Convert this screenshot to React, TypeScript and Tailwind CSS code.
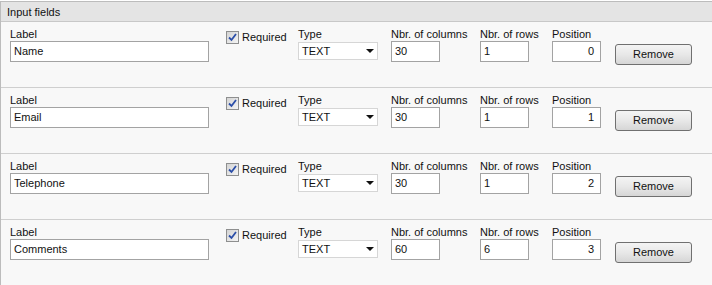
import React, { ReactElement } from "react";

const fields = [
  { label: "Name", cols: "30", rows: "1", position: "0" },
  { label: "Email", cols: "30", rows: "1", position: "1" },
  { label: "Telephone", cols: "30", rows: "1", position: "2" },
  { label: "Comments", cols: "60", rows: "6", position: "3" },
];

function Checkbox(): ReactElement {
  return (
    <div className="flex h-[13px] w-[13px] items-center justify-center border border-[#8e8f8f] bg-gradient-to-br from-[#d4d4d4] to-[#f4f4f4]">
      <svg width="9" height="9" viewBox="0 0 9 9">
        <path d="M1 4.5 L3.5 7 L8 1" fill="none" stroke="#2b4ea8" strokeWidth="1.8" />
      </svg>
    </div>
  );
}

function TextBox(props: { value: string; width: string; right?: boolean }): ReactElement {
  const { value, width, right } = props;
  return (
    <div
      className={`flex h-[21px] ${width} items-center border border-[#a3a3a3] bg-white ${
        right ? "justify-end pr-[6px]" : "pl-[3px]"
      }`}
    >
      {value}
    </div>
  );
}

function FieldRow(props: { label: string; cols: string; rows: string; position: string }): ReactElement {
  const { label, cols, rows, position } = props;
  return (
    <div className="flex h-[66px] border-b border-[#cfcfcf] bg-[#f8f8f8] pl-[9px] pt-[5px] last:border-b-0">
      <div className="w-[216px]">
        <div className="h-[14px] leading-[14px]">Label</div>
        <TextBox value={label} width="w-[199px]" />
      </div>
      <div className="flex w-[72px] items-center gap-[3px] self-start pt-[3px]">
        <Checkbox />
        <span className="leading-[14px]">Required</span>
      </div>
      <div className="w-[93px]">
        <div className="h-[14px] leading-[14px]">Type</div>
        <div className="mt-[1px] flex h-[18px] w-[80px] items-center justify-between border border-[#d6d6d6] bg-white pl-[3px] pr-[3px]">
          <span>TEXT</span>
          <svg width="8" height="4" viewBox="0 0 8 4">
            <path d="M0 0 H8 L4 4 Z" fill="#111" />
          </svg>
        </div>
      </div>
      <div className="w-[89px]">
        <div className="h-[14px] leading-[14px] whitespace-nowrap">Nbr. of columns</div>
        <TextBox value={cols} width="w-[49px]" />
      </div>
      <div className="w-[72px]">
        <div className="h-[14px] leading-[14px] whitespace-nowrap">Nbr. of rows</div>
        <TextBox value={rows} width="w-[49px]" />
      </div>
      <div className="w-[63px]">
        <div className="h-[14px] leading-[14px]">Position</div>
        <TextBox value={position} width="w-[49px]" right />
      </div>
      <div className="pt-[17px]">
        <button className="flex h-[21px] w-[77px] items-center justify-center rounded-[3px] border border-[#707070] bg-gradient-to-b from-[#f4f4f4] via-[#e8e8e8] to-[#d6d6d6] text-[#111]">
          Remove
        </button>
      </div>
    </div>
  );
}

export default function App(): ReactElement {
  return (
    <div
      className="h-[285px] w-[712px] overflow-hidden bg-white pt-[1px] text-[11px] text-[#111]"
      style={{ fontFamily: '"Liberation Sans", Arial, sans-serif' }}
    >
      <div className="border-l border-t border-[#bcbcbc]">
        <div className="flex h-[20px] items-center border-b border-[#c8c8c8] bg-[#e4e4e4] pl-[6px] pt-[1px]">
          Input fields
        </div>
        {fields.map((f) => (
          <FieldRow key={f.label} {...f} />
        ))}
      </div>
    </div>
  );
}
